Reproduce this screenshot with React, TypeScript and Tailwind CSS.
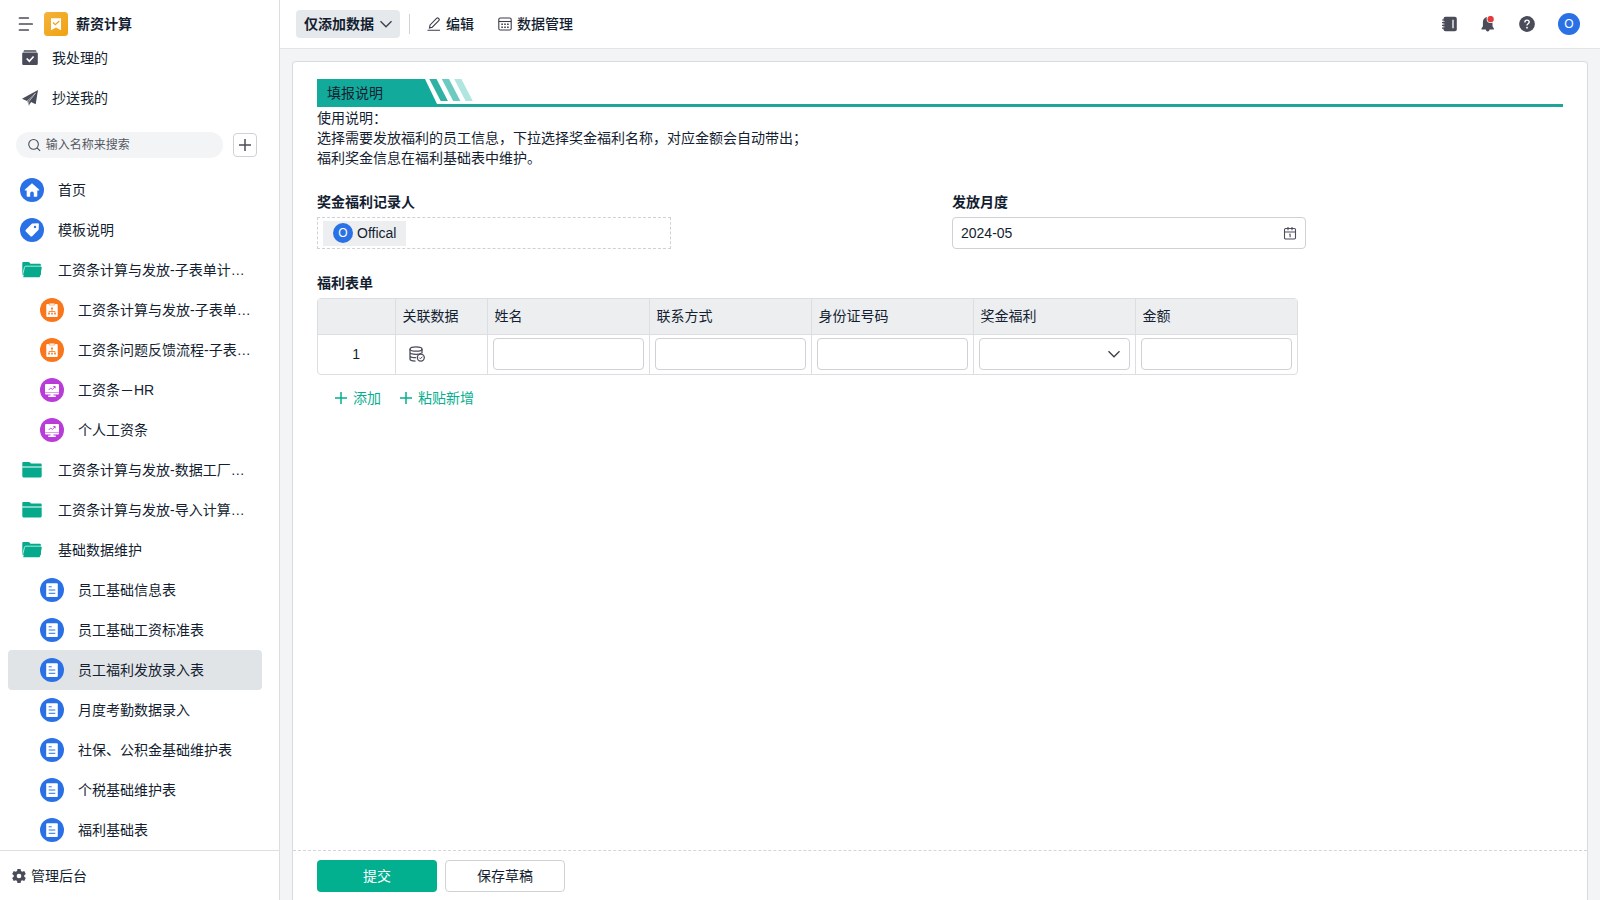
import type { ReactNode } from 'react';

type Kind = 'home' | 'tag' | 'open' | 'closed' | 'flow' | 'board' | 'form';
type Item = { kind: Kind; label: string; child?: boolean; active?: boolean };

const items: Item[] = [
  { kind: 'home', label: '首页' },
  { kind: 'tag', label: '模板说明' },
  { kind: 'open', label: '工资条计算与发放-子表单计…' },
  { kind: 'flow', label: '工资条计算与发放-子表单…', child: true },
  { kind: 'flow', label: '工资条问题反馈流程-子表…', child: true },
  { kind: 'board', label: '工资条－HR', child: true },
  { kind: 'board', label: '个人工资条', child: true },
  { kind: 'closed', label: '工资条计算与发放-数据工厂…' },
  { kind: 'closed', label: '工资条计算与发放-导入计算…' },
  { kind: 'open', label: '基础数据维护' },
  { kind: 'form', label: '员工基础信息表', child: true },
  { kind: 'form', label: '员工基础工资标准表', child: true },
  { kind: 'form', label: '员工福利发放录入表', child: true, active: true },
  { kind: 'form', label: '月度考勤数据录入', child: true },
  { kind: 'form', label: '社保、公积金基础维护表', child: true },
  { kind: 'form', label: '个税基础维护表', child: true },
  { kind: 'form', label: '福利基础表', child: true },
];

function ItemIcon({ kind }: { kind: Kind }) {
  return (
    <svg className="size-6 shrink-0" viewBox="0 0 24 24" aria-hidden="true">
      {kind === 'home' && (
        <>
          <circle cx="12" cy="12" r="12" fill="#2a71e5" />
          <path d="M12 5.200 19 11.600c.4.4.2 1-.4 1H17.300V18a.8.8 0 0 1-.8.8h-2.700v-3.600a1.800 1.800 0 0 0-3.600 0v3.600H7.500a.8.8 0 0 1-.8-.8v-5.400H5.400c-.6 0-.8-.6-.4-1z" fill="#fff" />
        </>
      )}
      {kind === 'tag' && (
        <>
          <circle cx="12" cy="12" r="12" fill="#2a71e5" />
          <path d="M12.700 5.400 18 5.200c.5 0 .9.4.9.9l-.2 5.100c0 .4-.2.7-.4.9l-6.100 6.100c-.5.5-1.200.5-1.700 0l-4.700-4.700c-.5-.5-.5-1.200 0-1.700l6-6c.3-.3.6-.4.9-.4z" fill="#fff" />
          <circle cx="15" cy="8.900" r="1.200" fill="#2a71e5" />
        </>
      )}
      {kind === 'open' && (
        <>
          <path d="M2.300 17V5.300c0-.8.5-1.300 1.200-1.300h4.800c.5 0 .9.200 1.200.6l.9 1.200h9c.9 0 1.500.5 1.500 1.300V17z" fill="#06a98c" />
          <path d="M3.200 19.300 5.200 9.800c.2-.7.6-1 1.200-1h14.300c.8 0 1.200.5 1 1.200l-1.600 8.200c-.2.800-.6 1.100-1.200 1.100z" fill="#06a98c" />
          <path d="m2.500 17.500 2-8.300c.2-.7.600-1 1.200-1h15.600" fill="none" stroke="#bdf3e6" strokeWidth=".9" />
        </>
      )}
      {kind === 'closed' && (
        <>
          <path d="M2.300 8.500V5.400c0-.8.500-1.300 1.300-1.300H9c.5 0 .8.200 1.100.5L11 5.500h9.300c.8 0 1.400.5 1.400 1.300v1.700z" fill="#06a98c" />
          <path d="M2.300 9.500h19.400v8.600c0 .8-.5 1.300-1.300 1.300H3.600c-.8 0-1.300-.5-1.300-1.300z" fill="#06a98c" />
        </>
      )}
      {kind === 'flow' && (
        <>
          <circle cx="12" cy="12" r="12" fill="#f8761c" />
          <rect x="6.300" y="6" width="11.400" height="13" rx="1" fill="#fff" />
          <path d="M9.300 5.200h5.400v1.900H9.300z" fill="#fff" stroke="#f8761c" strokeWidth=".5" />
          <path d="M12 11v3.500M9 15.500v-2h6v2" fill="none" stroke="#f8761c" strokeWidth=".8" />
          <path d="M11.100 9.500h1.800v1.700h-1.800zM8.200 15h1.600v1.500H8.200zM11.200 15h1.600v1.500h-1.600zM14.200 15h1.600v1.500h-1.600z" fill="#f8761c" />
        </>
      )}
      {kind === 'board' && (
        <>
          <circle cx="12" cy="12" r="12" fill="#b93bd8" />
          <rect x="5" y="6" width="14" height="10.500" rx="1" fill="#fff" />
          <path d="M10.500 16h3v1.600h2.300V19H8.200v-1.400h2.300z" fill="#fff" />
          <path d="M5 14.500h14" stroke="#b93bd8" strokeWidth=".5" />
          <path d="m8.700 12 2-2 1.600 1.400 2.700-2.600M13.300 8.500h1.900v1.900" fill="none" stroke="#b93bd8" strokeWidth=".9" />
        </>
      )}
      {kind === 'form' && (
        <>
          <circle cx="12" cy="12" r="12" fill="#2a71e5" />
          <rect x="6.200" y="5.300" width="11.600" height="13.700" rx="1" fill="#fff" />
          <path d="M8.700 8.800h3M8.700 12h6.600M8.700 15.300h6.600" stroke="#2a71e5" strokeWidth="1" />
        </>
      )}
    </svg>
  );
}

function Plus({ className }: { className: string }) {
  return (
    <svg className={className} viewBox="0 0 12 12" aria-hidden="true">
      <path d="M6 0v12M0 6h12" stroke="currentColor" strokeWidth="1.500" />
    </svg>
  );
}

function Chevron({ className }: { className: string }) {
  return (
    <svg className={className} viewBox="0 0 12 12" fill="none" aria-hidden="true">
      <path d="m.5 3.200 5.500 5.600 5.500-5.600" stroke="currentColor" strokeWidth="1.300" />
    </svg>
  );
}

function Sidebar() {
  return (
    <aside className="flex w-70 shrink-0 flex-col border-r border-[#dcdfe2] bg-white">
      <div className="flex h-[38px] shrink-0 items-end pr-4 pb-0.5 pl-[18px]">
        <button type="button" aria-label="收起菜单" className="flex h-6 items-center">
          <svg className="size-4" viewBox="0 0 16 16" aria-hidden="true">
            <path d="M1.500 2h8.800M1.500 8h12.700M1.500 14h8.800" stroke="#4a4c5a" strokeWidth="1.700" strokeLinecap="round" />
          </svg>
        </button>
        <svg className="ml-2.5 size-6" viewBox="0 0 24 24" aria-hidden="true">
          <defs>
            <linearGradient id="logo" x1="0" y1="0" x2="1" y2="1">
              <stop offset="0" stopColor="#f3b33c" />
              <stop offset="1" stopColor="#f1a111" />
            </linearGradient>
          </defs>
          <rect width="24" height="24" rx="3.500" fill="url(#logo)" />
          <path d="M7 6.200h10v12L12 15.600 7 18.200z" fill="#fff" />
          <path d="m9 10.500 2.300 2.200 4-3.700" fill="none" stroke="#f1a111" strokeWidth="1.200" />
        </svg>
        <span className="ml-2 text-sm leading-6 font-bold">薪资计算</span>
      </div>

      <nav className="flex shrink-0 flex-col" aria-label="流程">
        <a href="#handled" className="flex h-10 items-center gap-3.5 pl-[22px]">
          <svg className="size-4" viewBox="0 0 16 16" aria-hidden="true">
            <path d="M3 .3h10c.9 0 1.400.4 1.500 1.500h-13C1.600.7 2.100.3 3 .3z" fill="#4a4c5a" />
            <path d="M1.500 2.600h13c.8 0 1.300.5 1.300 1.300v9.500c0 1-.6 1.700-1.600 1.700H1.800c-1 0-1.600-.7-1.600-1.700V3.900c0-.8.500-1.300 1.300-1.300z" fill="#4a4c5a" />
            <path d="m4.700 8.500 2.600 2.700 4.300-4.700" fill="none" stroke="#fff" strokeWidth="1.700" />
          </svg>
          <span className="text-sm">我处理的</span>
        </a>
        <a href="#copied" className="flex h-10 items-center gap-3.5 pl-[22px]">
          <svg className="size-4" viewBox="0 0 16 16" aria-hidden="true">
            <path d="M16 0 0 8.800l5 2.300L13.500 3 8 11.600l5.700 2.600z" fill="#4a4c5a" />
            <path d="m5.500 11.300 1.200 4.400L8.800 12.500 13.500 3z" fill="#4a4c5a" />
            <path d="M6.700 15.500v-3.600L13.500 3" fill="none" stroke="#fff" strokeWidth=".6" />
          </svg>
          <span className="text-sm">抄送我的</span>
        </a>
      </nav>

      <div className="flex h-[52px] shrink-0 items-center gap-2.5 pt-px pr-[22px] pl-4">
        <label className="flex h-[26px] flex-1 items-center gap-[5px] rounded-full bg-[#f3f4f6] pl-3">
          <svg className="size-3.5" viewBox="0 0 14 14" fill="none" stroke="#4a4c5a" strokeWidth="1.200" aria-hidden="true">
            <circle cx="6.100" cy="6.300" r="5.300" />
            <path d="m10 10.200 3.300 3.300" />
          </svg>
          <input type="text" aria-label="搜索" placeholder="输入名称来搜索" className="w-full min-w-0 bg-transparent text-xs outline-none placeholder:text-[#565863]" />
        </label>
        <button type="button" aria-label="新建" className="flex size-6 items-center justify-center rounded-sm border border-[#cfd1d4] text-[#4a4c5a]">
          <Plus className="size-3" />
        </button>
      </div>

      <nav className="flex flex-1 flex-col px-2 pr-[17px]" aria-label="菜单">
        {items.map((it) => (
          <a
            key={it.label}
            href="#form"
            aria-current={it.active ? 'page' : undefined}
            className={`flex h-10 shrink-0 items-center gap-3.5 rounded ${it.child ? 'pl-8' : 'pl-3'} ${it.active ? 'bg-[#e1e4e7]' : ''}`}
          >
            <ItemIcon kind={it.kind} />
            <span className="text-sm whitespace-nowrap">{it.label}</span>
          </a>
        ))}
      </nav>

      <a href="#admin" className="flex h-[50px] shrink-0 items-center gap-[5px] border-t border-[#dcdfe2] pl-3">
        <svg className="size-3.5" viewBox="0 0 24 24" fill="#4a4c5a" aria-hidden="true">
          <path fillRule="evenodd" d="M9.300 0h5.400l.7 3.600 2.200 1.300L21 3.600l2.700 4.800L21 10.700v2.600l2.700 2.300-2.700 4.800-3.400-1.300-2.200 1.300-.7 3.600H9.300l-.7-3.600-2.200-1.300L3 20.400.3 15.600 3 13.300v-2.600L.3 8.400 3 3.600l3.400 1.300 2.200-1.300zM12 8a4 4 0 1 0 0 8 4 4 0 0 0 0-8z" />
        </svg>
        <span className="text-sm">管理后台</span>
      </a>
    </aside>
  );
}

function TopBar() {
  return (
    <header className="flex h-[49px] shrink-0 items-center border-b border-[#e1e4e8] bg-white pr-5 pl-4">
      <button type="button" className="flex h-7 items-center gap-1.5 rounded bg-[#e6e9ec] px-2 text-sm font-bold">
        仅添加数据
        <Chevron className="size-3 text-[#3b3d4a]" />
      </button>
      <span className="ml-[9px] h-5 w-px bg-[#cfd2d6]" />
      <button type="button" className="ml-[17px] flex items-center gap-[5px] text-sm font-medium">
        <svg className="size-3.5" viewBox="0 0 14 14" fill="none" stroke="#3b3d4a" strokeWidth="1.100" aria-hidden="true">
          <path d="M.5 13.300h12.500M2.500 10.900l.6-3L9.800 1.200c.4-.4 1-.4 1.400 0l.8.8c.4.4.4 1 0 1.400L5.300 10.200z" />
        </svg>
        编辑
      </button>
      <button type="button" className="ml-6 flex items-center gap-[5px] text-sm font-medium">
        <svg className="size-3.5" viewBox="0 0 14 14" fill="none" stroke="#3b3d4a" strokeWidth="1.100" aria-hidden="true">
          <rect x=".8" y="1" width="12.400" height="12" rx="1.500" />
          <path d="M.8 4.500h12.400" />
          <path d="M3.300 7.200h1.600M6.200 7.200h1.600M9.100 7.200h1.600M3.300 10.200h1.600M6.200 10.200h1.600M9.100 10.200h1.600" strokeWidth="1.400" />
        </svg>
        数据管理
      </button>

      <div className="ml-auto flex items-center gap-[23px]">
        <button type="button" aria-label="通讯录">
          <svg className="size-4" viewBox="0 0 16 16" aria-hidden="true">
            <rect x="2.500" y=".7" width="13.300" height="14.600" rx="2" fill="#4a4c5a" />
            <path d="M1 4h3M1 6.700h3M1 9.400h3M1 12.100h3" stroke="#4a4c5a" strokeWidth="1.200" />
            <path d="M2.500 5.400h1.200M2.500 8.100h1.200M2.500 10.800h1.200" stroke="#fff" strokeWidth=".6" />
            <path d="M12 3.800v8.400" stroke="#fff" strokeWidth="1.300" />
          </svg>
        </button>
        <button type="button" aria-label="消息">
          <svg className="size-4" viewBox="0 0 16 16" aria-hidden="true">
            <path d="M7.500 1C4.500 1.300 2.900 3.500 2.900 6.300v4L1.500 12.400v1.200h4.300c.2 1.200.8 2 1.900 2s1.700-.8 1.900-2h4.300v-1.200l-1.400-2.100V6z" fill="#4a4c5a" />
            <circle cx="10.600" cy="3.100" r="4" fill="#fff" />
            <circle cx="10.600" cy="3.100" r="3.200" fill="#e5393b" />
          </svg>
        </button>
        <button type="button" aria-label="帮助">
          <svg className="size-4" viewBox="0 0 16 16" aria-hidden="true">
            <circle cx="8" cy="8" r="7.900" fill="#4a4c5a" />
            <path d="M5.800 6.400c0-1.400.9-2.300 2.200-2.300s2.200.8 2.200 2c0 1.700-2.200 1.700-2.200 3.400" fill="none" stroke="#fff" strokeWidth="1.400" />
            <circle cx="8" cy="11.700" r=".9" fill="#fff" />
          </svg>
        </button>
        <button type="button" aria-label="账户" className="flex size-[22px] items-center justify-center rounded-full bg-[#2a71e5] text-xs text-white">
          O
        </button>
      </div>
    </header>
  );
}

function FieldLabel({ id, children }: { id: string; children: ReactNode }) {
  return (
    <label htmlFor={id} className="block text-sm leading-5 font-bold">
      {children}
    </label>
  );
}

const box = 'block h-8 w-full rounded border border-[#cfd1d4] bg-white px-2 text-sm outline-none';
const columns = ['姓名', '联系方式', '身份证号码', '奖金福利', '金额'];

function BenefitTable() {
  return (
    <div className="w-fit rounded-sm border border-[#dcdee1]">
      <table className="table-fixed border-collapse text-sm" aria-labelledby="benefits">
        <colgroup>
          <col className="w-[77px]" />
          <col className="w-[92px]" />
          {columns.map((c) => (
            <col key={c} className="w-[162px]" />
          ))}
        </colgroup>
        <thead>
          <tr className="h-[35px] border-b border-[#dcdee1] bg-[#eceef0]">
            <th className="border-r border-[#dcdee1]" aria-label="序号" />
            <th className="border-r border-[#dcdee1] px-[7px] text-left font-normal">关联数据</th>
            {columns.map((c) => (
              <th key={c} className="border-r border-[#dcdee1] px-[7px] text-left font-normal last:border-r-0">
                {c}
              </th>
            ))}
          </tr>
        </thead>
        <tbody>
          <tr className="h-10">
            <td className="border-r border-[#dcdee1] text-center">1</td>
            <td className="border-r border-[#dcdee1] px-[13px]">
              <button type="button" aria-label="选择关联数据" className="block">
                <svg className="size-4" viewBox="0 0 16 16" fill="none" stroke="#4a4c5a" strokeWidth="1.300" aria-hidden="true">
                  <ellipse cx="7" cy="3" rx="6" ry="2.200" />
                  <path d="M1 3v10c0 1 2.200 2 5.500 2.100M13 3v4.300M1 6.300c0 1.200 2.700 2.100 6 2.100 2.300 0 4.400-.4 5.400-1.100M1 9.700c0 1.100 2.700 2 6 2" />
                  <circle cx="11.800" cy="11.600" r="3.500" fill="#fff" />
                  <path d="m10.200 11.600 1.200 1.200 2-2.100" strokeWidth="1" />
                </svg>
              </button>
            </td>
            {columns.map((c) => (
              <td key={c} className="border-r border-[#dcdee1] px-[5px] last:border-r-0">
                {c === '奖金福利' ? (
                  <div className="relative">
                    <select aria-label={c} className={`${box} appearance-none`} defaultValue="">
                      <option value="" />
                    </select>
                    <Chevron className="pointer-events-none absolute top-2.5 right-2.5 size-3 text-[#3b3d4a]" />
                  </div>
                ) : (
                  <input type="text" aria-label={c} className={box} />
                )}
              </td>
            ))}
          </tr>
        </tbody>
      </table>
    </div>
  );
}

function FormCard() {
  return (
    <main className="mx-3 mt-3 flex flex-1 flex-col rounded-t border border-b-0 border-[#d8dbdf] bg-white">
      <div className="flex-1 px-6 pt-[17px]">
        <div className="flex h-7 items-start border-b-3 border-[#1fa497]">
          <h1 className="h-7 w-[108px] bg-[#12aa9b] pl-2.5 text-sm leading-7">填报说明</h1>
          <svg className="h-7 w-12" viewBox="0 0 48 28" aria-hidden="true">
            <path d="M0 0 12 25v3H0z" fill="#12aa9b" />
            <path d="M4.300 0h7.200l11.400 22h-7.200z" fill="#2fb1a3" />
            <path d="M16.800 0H24l11.400 22h-7.200z" fill="#6ccbc1" />
            <path d="M29.200 0h7.200l11.400 22h-7.200z" fill="#b0e6df" />
          </svg>
        </div>
        <p className="pt-px text-sm leading-5">
          使用说明：
          <br />
          选择需要发放福利的员工信息，下拉选择奖金福利名称，对应金额会自动带出；
          <br />
          福利奖金信息在福利基础表中维护。
        </p>

        <div className="mt-6 grid grid-cols-2 gap-x-6">
          <div>
            <p className="text-sm leading-5 font-bold">奖金福利记录人</p>
            <div className="mt-[5px] flex h-8 w-[58%] items-center border border-dashed border-[#cfd1d4] px-[5px]">
              <span className="flex h-[25px] items-center gap-1 bg-[#eceef0] px-2.5 text-sm">
                <span className="flex size-5 items-center justify-center rounded-full bg-[#2a71e5] text-xs text-white">O</span>
                Offical
              </span>
            </div>
          </div>
          <div>
            <FieldLabel id="month">发放月度</FieldLabel>
            <div className="relative mt-[5px] w-[58%]">
              <input id="month" type="text" defaultValue="2024-05" className={box} />
              <svg className="pointer-events-none absolute top-2 right-2 size-4" viewBox="0 0 16 16" fill="none" stroke="#4a4c5a" strokeWidth="1.100" aria-hidden="true">
                <rect x="2.500" y="3.500" width="11" height="10.500" rx="1.200" />
                <path d="M2.500 7h11M6 2v3.300M10 2v3.300M7.200 9.200h.9v3" />
              </svg>
            </div>
          </div>
        </div>

        <h2 id="benefits" className="mt-6 mb-[5px] text-sm leading-5 font-bold">
          福利表单
        </h2>
        <BenefitTable />

        <div className="mt-[13px] flex gap-[19px] pl-[18px] text-sm leading-5 text-[#06ae8f]">
          <button type="button" className="flex items-center gap-1.5">
            <Plus className="size-3" />
            添加
          </button>
          <button type="button" className="flex items-center gap-1.5">
            <Plus className="size-3" />
            粘贴新增
          </button>
        </div>
      </div>

      <footer className="flex h-[50px] items-center gap-2 border-t border-dashed border-[#d3d5d8] px-6">
        <button type="submit" className="h-8 w-30 rounded bg-[#02b08f] text-sm text-white">
          提交
        </button>
        <button type="button" className="h-8 w-30 rounded border border-[#cfd1d4] bg-white text-sm">
          保存草稿
        </button>
      </footer>
    </main>
  );
}

export default function App() {
  return (
    <div className="flex min-h-screen bg-[#f2f4f6] font-['Liberation_Sans','Noto_Sans_CJK_SC',sans-serif] text-[#141e31]">
      <Sidebar />
      <div className="flex min-w-0 flex-1 flex-col">
        <TopBar />
        <FormCard />
      </div>
    </div>
  );
}
